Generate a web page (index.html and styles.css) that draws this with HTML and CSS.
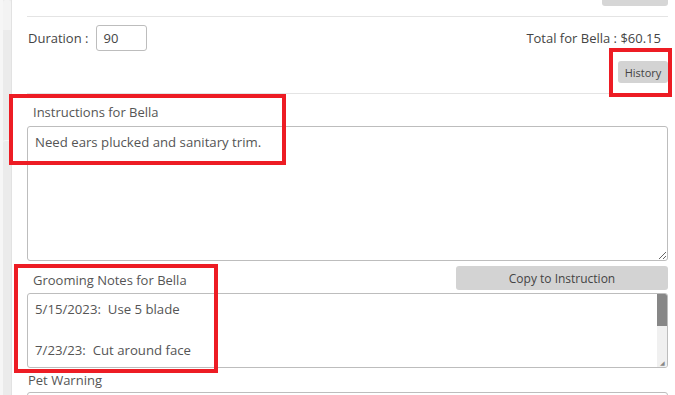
FILE: index.html
```html
<!DOCTYPE html>
<html>
<head>
<meta charset="utf-8">
<link rel="stylesheet" href="styles.css">
</head>
<body>
<div class="page">
  <div class="sidebar">
    <div class="rail"></div>
    <div class="track">
      <div class="seg s1"></div>
      <div class="seg s2"></div>
      <div class="seg s3"></div>
    </div>
  </div>
  <div class="main">
    <div class="top-row"><span class="top-btn"></span></div>
    <div class="rule"></div>
    <div class="dur-row">
      <div class="dur">
        <span class="lbl">Duration :</span>
        <input class="dur-input" type="text" value="90">
      </div>
      <div class="total">Total for Bella : $60.15</div>
    </div>
    <div class="hist-row"><button class="btn hist">History</button></div>
    <div class="rule"></div>
    <div class="field-label first">Instructions for Bella</div>
    <textarea class="ta ta-instr">Need ears plucked and sanitary trim.</textarea>
    <div class="notes-row">
      <div class="field-label notes-label">Grooming Notes for Bella</div>
      <button class="btn copy">Copy to Instruction</button>
    </div>
    <div class="ta ta-notes">
      <div class="notes-text">
        <div>5/15/2023:&nbsp; Use 5 blade</div>
        <div>&nbsp;</div>
        <div>7/23/23:&nbsp; Cut around face</div>
      </div>
      <div class="sbar"><div class="thumb"></div><div class="grip">&#x25E2;</div></div>
    </div>
    <div class="field-label warn">Pet Warning</div>
    <div class="ta ta-warn"></div>
  </div>
  <div class="mark m1"></div>
  <div class="mark m2"></div>
  <div class="mark m3"></div>
</div>
</body>
</html>
```

FILE: styles.css
```css
html, body {
  margin: 0;
  padding: 0;
  background: #fff;
  overflow: hidden;
}
body {
  font-family: "Open Sans", "Liberation Sans", sans-serif;
  color: #444;
}
.page {
  position: relative;
  display: flex;
  width: 675px;
  height: 395px;
  overflow: hidden;
}
.sidebar {
  width: 12px;
  flex: none;
  display: flex;
  background: #ececec;
  border-right: 1px solid #e2e2e2;
  box-sizing: border-box;
}
.rail {
  width: 3px;
  background: #f6f6f6;
}
.track {
  flex: 1;
  display: flex;
  flex-direction: column;
}
.seg {
  background: #ebebeb;
  border-radius: 3px 3px 0 0;
}
.s1 { height: 30px; background: #f3f3f3; }
.s2 { height: 110px; }
.s3 { flex: 1; border-top: 1px solid #f6f6f6; }
.main {
  flex: 1;
  padding: 0 7px 0 15px;
  display: flex;
  flex-direction: column;
}
.main > * { flex: none; }
.top-row {
  display: flex;
  justify-content: flex-end;
  height: 16px;
}
.top-btn {
  display: block;
  width: 66px;
  height: 6px;
  background: #d6d6d6;
  border-radius: 0 0 3px 3px;
}
.rule {
  height: 1px;
  background: #e4e4e4;
}
.dur-row {
  display: flex;
  justify-content: space-between;
  align-items: center;
  margin-top: 8px;
  height: 26px;
}
.dur {
  display: flex;
  align-items: center;
}
.lbl, .total {
  font-size: 13px;
  color: #444;
}
.lbl { margin-left: 1px; }
.dur-input {
  margin-left: 8px;
  width: 51px;
  height: 26px;
  box-sizing: border-box;
  border: 1px solid #bdbdbd;
  border-radius: 3px;
  padding: 0 6px;
  font-family: inherit;
  font-size: 13px;
  color: #444;
  outline: none;
}
.total { margin-right: 7px; }
.hist-row {
  display: flex;
  justify-content: flex-end;
  margin-top: 10px;
  margin-bottom: 10px;
}
.btn {
  border: none;
  background: #d3d3d3;
  border-radius: 3px;
  font-family: inherit;
  color: #444;
  padding: 0;
  cursor: pointer;
}
.hist {
  width: 50px;
  height: 22px;
  font-size: 11px;
}
.field-label {
  font-size: 13px;
  color: #555;
  line-height: 18px;
}
.first {
  margin: 9px 0 0 6px;
  height: 23px;
}
.ta {
  display: block;
  width: 100%;
  box-sizing: border-box;
  border: 1px solid #bdbdbd;
  border-radius: 3px;
  background: #fff;
  font-family: inherit;
  color: #555;
}
.ta-instr {
  height: 135px;
  padding: 5px 7px;
  font-size: 13.2px;
  line-height: 20px;
  resize: vertical;
  outline: none;
}
.notes-row {
  display: flex;
  justify-content: space-between;
  align-items: center;
  margin-top: 5px;
  height: 24px;
}
.notes-label { margin-left: 6px; margin-top: 4px; }
.copy {
  width: 212px;
  height: 24px;
  font-size: 12px;
}
.ta-notes {
  margin-top: 3px;
  height: 75px;
  display: flex;
  overflow: hidden;
}
.notes-text {
  flex: 1;
  padding: 5px 7px;
  font-size: 13.2px;
  line-height: 20.5px;
}
.sbar {
  width: 10px;
  background: #f0f0f0;
  display: flex;
  flex-direction: column;
}
.thumb {
  height: 32px;
  background: #878787;
}
.grip {
  margin-top: auto;
  font-size: 6px;
  color: #888;
  text-align: center;
  line-height: 8px;
}
.warn {
  margin: 3px 0 0 1px;
  height: 18px;
}
.ta-warn {
  margin-top: 3px;
  height: 40px;
}
.mark {
  position: absolute;
  border: 4px solid #ed1c24;
  box-sizing: border-box;
}
.m1 { left: 609px; top: 48px; width: 63px; height: 49px; }
.m2 { left: 9px; top: 94px; width: 277px; height: 71px; }
.m3 { left: 14px; top: 264px; width: 204px; height: 109px; }
```
